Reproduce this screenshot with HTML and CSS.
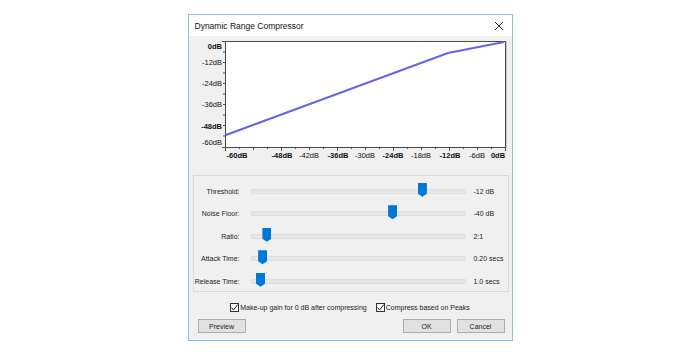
FILE: index.html
```html
<!DOCTYPE html>
<html lang="en">
<head>
    <meta charset="UTF-8">
    <meta name="viewport" content="width=device-width, initial-scale=1.0">
    <title>Dynamic Range Compressor</title>
    <link rel="stylesheet" href="styles.css">
</head>
<body>
    <div class="window">
        <div class="titlebar">
            <span class="title">Dynamic Range Compressor</span>
            <svg class="close" width="10" height="10" viewBox="0 0 10 10">
                <path d="M1 1 L9 9 M9 1 L1 9" stroke="#222" stroke-width="1" fill="none"/>
            </svg>
        </div>

        <!-- response curve -->
        <svg class="graph" width="323" height="136" viewBox="0 0 323 136">
            <rect x="36.5" y="5.5" width="280" height="106" fill="#fff" stroke="#4a4a4a"/>
            <line x1="317.5" y1="6" x2="317.5" y2="112" stroke="#c8c8c8"/>

            <g stroke="#555" stroke-width="1">
                <path d="M33 5.5h3 M34 16h2 M34 26.5h2 M34 37h2 M34 47.5h2 M34 58h2 M34 68.5h2 M34 79h2 M34 89.5h2 M34 100h2 M33 111.5h3"/>
                <path d="M36.5 112v3 M64.5 112v2 M92.5 112v3 M120.5 112v2 M148.5 112v3 M176.5 112v2 M204.5 112v3 M232.5 112v2 M260.5 112v3 M288.5 112v2 M316.5 112v3"/>
                <path d="M50.5 112v1 M78.5 112v1 M106.5 112v1 M134.5 112v1 M162.5 112v1 M190.5 112v1 M218.5 112v1 M246.5 112v1 M274.5 112v1 M302.5 112v1"/>
            </g>

            <g class="ylabels" text-anchor="end">
                <text x="33" y="12.5" class="major">0dB</text>
                <text x="33" y="28.5">-12dB</text>
                <text x="33" y="49.5">-24dB</text>
                <text x="33" y="70.5">-36dB</text>
                <text x="33" y="92.5" class="major">-48dB</text>
                <text x="33" y="108.5">-60dB</text>
            </g>

            <g class="xlabels" text-anchor="middle">
                <text x="48" y="122" class="major">-60dB</text>
                <text x="93" y="122" class="major">-48dB</text>
                <text x="120" y="122">-42dB</text>
                <text x="149" y="122" class="major">-36dB</text>
                <text x="176" y="122">-30dB</text>
                <text x="204" y="122" class="major">-24dB</text>
                <text x="232" y="122">-18dB</text>
                <text x="261" y="122" class="major">-12dB</text>
                <text x="288" y="122">-6dB</text>
                <text x="309" y="122" class="major">0dB</text>
            </g>

            <polyline points="37,99 259,17 315,6" fill="none" stroke="#6763e6" stroke-width="2"/>
        </svg>

        <div class="panel">
            <div class="row">
                <span class="label">Threshold:</span>
                <div class="track"><span class="thumb" style="left: 80%"></span></div>
                <span class="value">-12 dB</span>
            </div>
            <div class="row">
                <span class="label">Noise Floor:</span>
                <div class="track"><span class="thumb" style="left: 66%"></span></div>
                <span class="value">-40 dB</span>
            </div>
            <div class="row">
                <span class="label">Ratio:</span>
                <div class="track"><span class="thumb" style="left: 7%"></span></div>
                <span class="value">2:1</span>
            </div>
            <div class="row">
                <span class="label">Attack Time:</span>
                <div class="track"><span class="thumb" style="left: 5%"></span></div>
                <span class="value">0.20 secs</span>
            </div>
            <div class="row">
                <span class="label">Release Time:</span>
                <div class="track"><span class="thumb" style="left: 4%"></span></div>
                <span class="value">1.0 secs</span>
            </div>
        </div>

        <div class="checks">
            <label class="check">
                <span class="box">
                    <svg width="9" height="9" viewBox="0 0 9 9"><path d="M1.5 4.5 L3.5 7 L7.8 1.5" stroke="#222" stroke-width="1" fill="none"/></svg>
                </span>
                Make-up gain for 0 dB after compressing
            </label>
            <label class="check">
                <span class="box">
                    <svg width="9" height="9" viewBox="0 0 9 9"><path d="M1.5 4.5 L3.5 7 L7.8 1.5" stroke="#222" stroke-width="1" fill="none"/></svg>
                </span>
                Compress based on Peaks
            </label>
        </div>

        <div class="buttons">
            <button class="btn">Preview</button>
            <div class="spacer"></div>
            <button class="btn">OK</button>
            <button class="btn">Cancel</button>
        </div>
    </div>
</body>
</html>
```

FILE: styles.css
```css
body {
    margin: 0;
    padding-top: 14px;
    background: white;
    font-family: 'Liberation Sans', Arial, sans-serif;
    display: flex;
    justify-content: center;
}

.window {
    width: 325px;
    height: 327px;
    box-sizing: border-box;
    border: 1px solid #8cc0ea;
    background: #f0f0f0;
    display: flex;
    flex-direction: column;
}

.titlebar {
    height: 21px;
    background: white;
    display: flex;
    align-items: center;
    padding: 0 8px 0 6px;
}

.title {
    font-size: 8.5px;
    color: #111;
    flex: 1;
}

.graph {
    display: block;
}

.graph text {
    font-family: 'Liberation Sans', Arial, sans-serif;
    font-size: 7.5px;
    fill: #111;
}

.graph text.major {
    font-weight: bold;
}

.panel {
    margin: 3px 3px 0 4px;
    height: 117px;
    box-sizing: border-box;
    border: 1px solid #dadada;
    padding-top: 4px;
}

.row {
    height: 22.5px;
    display: grid;
    grid-template-columns: 46px 215px auto;
    column-gap: 11px;
    align-items: center;
    font-size: 7px;
    color: #222;
}

.label {
    text-align: right;
}

.value {
    margin-left: -3px;
}

.track {
    position: relative;
    height: 3px;
    background: #e7e7e7;
    border: 1px solid #dedede;
    border-radius: 1px;
}

.thumb {
    position: absolute;
    top: -7px;
    width: 9px;
    height: 14px;
    margin-left: -4px;
    background: #0078d7;
    clip-path: polygon(0 0, 100% 0, 100% 78%, 50% 100%, 0 78%);
}

.checks {
    margin-top: 10px;
    height: 10px;
    display: flex;
    justify-content: center;
    gap: 9px;
    font-size: 7px;
    color: #222;
}

.check {
    display: flex;
    align-items: center;
    gap: 1px;
}

.box {
    width: 9px;
    height: 9px;
    box-sizing: border-box;
    border: 1px solid #333;
    background: white;
    display: flex;
}

.box svg {
    margin: -1px;
}

.buttons {
    margin-top: 7px;
    display: flex;
    padding: 0 7px 0 9px;
    gap: 6px;
}

.spacer {
    flex: 1;
}

.btn {
    width: 48px;
    height: 14px;
    padding: 0;
    font-family: 'Liberation Sans', Arial, sans-serif;
    font-size: 7px;
    color: #222;
    background: #e1e1e1;
    border: 1px solid #adadad;
}
```
